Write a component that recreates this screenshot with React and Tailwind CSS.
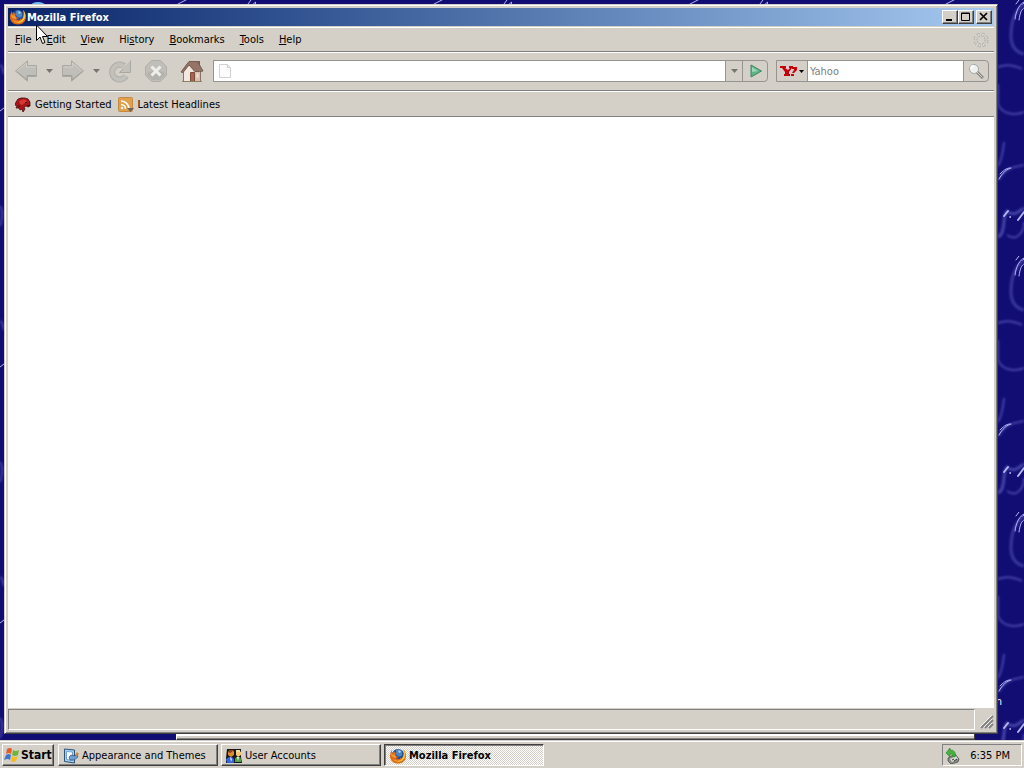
import React, { useState } from 'react';

function Wallpaper() {
  return (
    <svg className="absolute inset-0 h-full w-full" aria-hidden="true">
      <defs>
        <filter id="soft" x="-20%" y="-20%" width="140%" height="140%">
          <feGaussianBlur stdDeviation="1.1" />
        </filter>
        <filter id="glint" x="-20%" y="-20%" width="140%" height="140%">
          <feGaussianBlur stdDeviation="0.4" />
        </filter>
        <pattern id="swirls" width="256" height="256" patternUnits="userSpaceOnUse">
          <rect width="256" height="256" fill="#110d72" />
          <g fill="none" stroke="#4644a8" strokeWidth="2" filter="url(#soft)">
            <path d="M256 54C248 52 243 46 243 36C243 22 246 12 256 4" stroke="#3a37a0" strokeWidth="3" />
            <path d="M230 67C238 64 246 65 254 69M230 84V104C234 114 246 116 256 112" />
            <path d="M230 166C234 160 235 152 236 142M231 180C237 168 246 167 256 165" />
            <path d="M230 237C238 234 234 216 239 211C246 218 252 210 256 208" strokeWidth="3" />
            <path d="M239 235C249 242 256 232 256 222M0 66C2 64 3 70 4 74M0 206C3 210 3 218 0 226" />
          </g>
          <g fill="none" stroke="#b4b8f0" strokeLinecap="round" filter="url(#glint)">
            <path d="M247 19C248 10 252 4 256 2M251 20C252 12 254 9 256 8" />
            <path d="M231 179C234 173 239 169 243 168M232 174C235 171 238 168 242 168" />
            <path d="M236 216L240 211M250 220L256 212" strokeWidth="2" />
            <path d="M178 4L186 0M248 4L251 0M255 4L258 0M0 111L4 108" />
            <circle cx="242" cy="217" r=".5" />
          </g>
        </pattern>
      </defs>
      <rect width="100%" height="100%" fill="url(#swirls)" />
      {/* Top of a desktop icon peeking out */}
      <ellipse cx="38" cy="5" rx="7" ry="3" fill="#6cbdf0" />
    </svg>
  );
}

function FirefoxIcon() {
  return (
    <svg viewBox="0 0 16 16" className="h-4 w-4 shrink-0" aria-hidden="true">
      <circle cx="8" cy="7.500" r="6.500" fill="#24509b" />
      <path d="M6 2C9 0 13 3 12 7C10 10 7 8 6 6Z" fill="#4d86c4" />
      <path d="M8 3C9 2 11 3 11 4L9 5Z" fill="#a7d3ee" />
      <path d="M2 2C1 3 0 6 0 8C0 12 3 15.500 8 15.500C13 15.500 16 12 16 8C16 5 15 3 13 1C15 5 14 8 12 10C10 12 7 11 6 10L9 9C7 8 5 8 5 6L7 5C5 5 4 4 4 3L2 5Z" fill="#e06a16" />
      <path d="M13 1C16 4 16 9 13 12C10 15 5 14 3 11C7 14 11 13 13 9C14 6 14 4 13 1Z" fill="#f8c43c" />
      <path d="M1 5L3 7L5 6L6 10C4 10 2 9 1 7Z" fill="#f29830" />
    </svg>
  );
}

function ArrowIcon({ flip }) {
  return (
    <svg viewBox="0 0 24 22" className={flip ? 'h-[22px] w-6 -scale-x-100' : 'h-[22px] w-6'} aria-hidden="true">
      <path d="M1.500 11L13.500 .8V5.500H22.500V16.500H13.500V21.200Z" fill="#c0beb8" stroke="#aaa8a3" />
      <path d="M3.500 10.500L12.500 3V7H21.500" fill="none" stroke="#d0cec8" />
      <path d="M3 12L13 20V15.500H22" fill="none" stroke="#a19f9a" />
    </svg>
  );
}

function ReloadIcon() {
  return (
    <svg viewBox="0 0 24 24" className="h-6 w-6" aria-hidden="true">
      <path d="M16 7A7.500 7.500 0 1 0 18 17" fill="none" stroke="#b0aea9" strokeWidth="6" />
      <path d="M16 7A7.500 7.500 0 1 0 18 17" fill="none" stroke="#c3c1bb" strokeWidth="4" />
      <path d="M22.500 1.500V13.500H11.500L15 10L12.500 7.500L17 7Z" fill="#c3c1bb" />
      <path d="M22.500 1.500V13.500H11.500L15 10" fill="none" stroke="#aaa8a3" />
    </svg>
  );
}

function StopIcon() {
  return (
    <svg viewBox="0 0 24 24" className="h-6 w-6" aria-hidden="true">
      <path d="M7.500 1.500H16.500L22.500 7.500V16.500L16.500 22.500H7.500L1.500 16.500V7.500Z" fill="#c0beb9" stroke="#b0aea9" />
      <path d="M3 14Q12 9 21 14V16L16 21H8L3 16Z" fill="#b4b2ad" />
      <path d="M7.500 7.500L16.500 16.500M16.500 7.500L7.500 16.500" stroke="#efeeea" strokeWidth="3" />
    </svg>
  );
}

function HomeIcon() {
  return (
    <svg viewBox="0 0 24 24" className="h-6 w-6" aria-hidden="true">
      <path d="M3.500 11L9 4L20.500 11V22.500H3.500Z" fill="#d9c0af" stroke="#8a7364" />
      <path d="M4 12L9 6L13 11V22H4Z" fill="#f3e8df" />
      <path d="M17 2H20V7H17Z" fill="#8b5a4d" />
      <path d="M1 13L9 2.500L17.500 2.500L23 12L19.500 12.500H15L9 6L3 13.500Z" fill="#957468" stroke="#755a50" />
      <path d="M10.500 13.500H14.500V22.500H10.500Z" fill="#a8624e" stroke="#7b4a3d" />
      <path d="M16.500 14.500H18.500V18.500H16.500Z" fill="#f0dfd2" />
      <path d="M2 22.500H22" stroke="#8b8263" />
    </svg>
  );
}

function PageIcon() {
  return (
    <svg viewBox="0 0 12 14" className="h-[14px] w-3 shrink-0" aria-hidden="true">
      <path d="M.5.500H8.500L11.500 3.500V13.500H.500Z" fill="#fcfcfc" stroke="#d2d2d2" />
      <path d="M8.500.500V3.500H11.500" fill="none" stroke="#d2d2d2" />
    </svg>
  );
}

function Caret({ dark }) {
  return (
    <svg viewBox="0 0 7 4" className={dark ? 'h-[3px] w-[5px] shrink-0' : 'h-1 w-[7px] shrink-0'} aria-hidden="true">
      <path d="M0 0H7L3.500 4Z" fill={dark ? '#000' : '#77756f'} />
    </svg>
  );
}

function GoIcon() {
  return (
    <svg viewBox="0 0 12 14" className="h-[14px] w-3" aria-hidden="true">
      <path d="M1 1L11.500 7L1 13Z" fill="#5fb488" stroke="#3b8560" />
      <path d="M2 3L8 7L2 8Z" fill="#9bd6b7" />
    </svg>
  );
}

function YahooIcon() {
  return (
    <svg viewBox="0 0 17 12" className="h-3 w-[17px] shrink-0" aria-hidden="true">
      <path d="M0 1H6V3H5L8 5L10 3H9V1H13V3H12L9 7V9H10V11H4V9H5V7L2 3H0Z" fill="#c8000c" />
      <path d="M12 2H17V5L14 8H12L14 5V4H12ZM11 9H14V11H11Z" fill="#c8000c" />
    </svg>
  );
}

function SearchIcon() {
  return (
    <svg viewBox="0 0 16 16" className="h-4 w-4" aria-hidden="true">
      <path d="M9 9L15 15" stroke="#85837d" strokeWidth="3" />
      <path d="M9 9L14.500 14.500" stroke="#d7d6d2" />
      <circle cx="6" cy="6" r="4.500" fill="#edf1f1" stroke="#a5a6a5" />
      <path d="M3 6Q3 3 6 3" fill="none" stroke="#fff" strokeWidth="2" />
    </svg>
  );
}

function Throbber() {
  return (
    <svg viewBox="0 0 16 16" className="h-4 w-4" aria-hidden="true">
      <circle cx="8" cy="8" r="5.500" fill="none" stroke="#b3b1ac" strokeWidth="4" strokeDasharray="2.600 1.700" />
      <circle cx="8" cy="8" r="5.500" fill="none" stroke="#dedcd7" strokeWidth="2" strokeDasharray="1.600 2.700" strokeDashoffset="-.5" />
    </svg>
  );
}

function DinoIcon() {
  return (
    <svg viewBox="0 0 16 16" className="h-4 w-4 shrink-0" aria-hidden="true">
      <path d="M1 5L3 2L6 1H10L13 2L15 5V9L13 10L11 9L9 10L10 12L8 15L7 12L5 13L4 11L1 11L2 9L0 8Z" fill="#a81417" stroke="#4c0c10" strokeWidth=".8" />
      <path d="M4 4L9 2L12 4L10 6L7 8L5 7Z" fill="#d93635" />
      <path d="M10 5H12V6H10M12 8H15V9H12M3 8L5 9L4 10" fill="#2b090a" />
    </svg>
  );
}

function FeedIcon() {
  return (
    <svg viewBox="0 0 16 16" className="h-4 w-4 shrink-0" aria-hidden="true">
      <rect x=".5" y=".5" width="14" height="14" rx="1" fill="#e3a04c" stroke="#c48a40" />
      <path d="M3 4A8 8 0 0 1 11 12M3 7.500A4.500 4.500 0 0 1 7.500 12" fill="none" stroke="#fff" strokeWidth="1.600" />
      <circle cx="4" cy="11" r="1.200" fill="#fff" />
      <path d="M9 11H16L12.500 15Z" fill="#6c6259" />
    </svg>
  );
}

function WindowsIcon() {
  return (
    <svg viewBox="0 0 16 16" className="h-4 w-4 shrink-0" aria-hidden="true">
      <path d="M3 2Q6 0 8 2L7 7Q5 5 2 7Z" fill="#e85a27" />
      <path d="M9 3Q12 5 15 3L14 8Q11 10 8 8Z" fill="#70b536" />
      <path d="M2 8Q5 6 7 8L6 13Q4 11 0 13Z" fill="#4274d0" />
      <path d="M8 9Q11 11 14 9L12 14Q9 16 7 14Z" fill="#f4bd21" />
    </svg>
  );
}

function ThemesIcon() {
  return (
    <svg viewBox="0 0 16 16" className="h-4 w-4 shrink-0" aria-hidden="true">
      <path d="M1.500 1L11.500 2V15L1.500 13.500Z" fill="#a9cfee" stroke="#2b5478" />
      <path d="M3.500 3.500L9.500 4V12.500L3.500 11.500Z" fill="#fff" stroke="#6fa0cc" />
      <path d="M6 9L8 7L12 8L14 6L15 9L11 12H7Z" fill="#6f9ed2" stroke="#233f6c" strokeWidth=".6" />
      <path d="M12 7L14 4L16 6L14 8Z" fill="#cc8539" />
    </svg>
  );
}

function UsersIcon() {
  return (
    <svg viewBox="0 0 16 16" className="h-4 w-4 shrink-0" aria-hidden="true">
      <path d="M1 1H15V9L16 15H0V10Z" fill="#171717" />
      <path d="M2 4L4 2H7L8 4V7L5 9L2 7Z" fill="#dc8c34" />
      <path d="M2 4L4 2H7L6 4L4 5Z" fill="#8e421b" />
      <path d="M10 4L12 2L15 4V7L12 9L10 7Z" fill="#f2c77a" />
      <path d="M10 2H14V4H10Z" fill="#f2e29a" />
      <path d="M0 11L3 9H6L8 11V15H1Z" fill="#3563dc" />
      <path d="M9 11L10 9H14L15 11V14H9Z" fill="#52a04a" />
      <path d="M4 9L6 11L5 14ZM11 9H13L12 13Z" fill="#eef5ff" />
    </svg>
  );
}

function TrayIcon() {
  return (
    <svg viewBox="0 0 16 16" className="h-4 w-4 shrink-0" aria-hidden="true">
      <path d="M3 10L10 6L14 11L13 14L6 16L3 13Z" fill="#8a8c87" stroke="#41423f" strokeWidth=".7" />
      <path d="M5 11L11 8L13 11L7 14Z" fill="#d9dbd5" />
      <path d="M7 12L9 11M9 13L12 11" stroke="#333" />
      <path d="M1 5L5 0V2C9 2 11 4 10 9L7 8C8 6 7 6 5 6V9Z" fill="#46b340" stroke="#1c7a1f" strokeWidth=".6" />
    </svg>
  );
}

function CaptionButton({ label, children }) {
  return (
    <button
      aria-label={label}
      className="flex h-[14px] w-4 items-center justify-center border border-t-white border-l-white border-r-[#404040] border-b-[#404040] bg-[#d4d0c8] shadow-[inset_-1px_-1px_0_#808080]"
    >
      <svg viewBox="0 0 10 10" className="h-[10px] w-[10px]" fill="none" stroke="#000" aria-hidden="true">
        {children}
      </svg>
    </button>
  );
}

const menus = [
  { key: 'F', before: '', after: 'ile' },
  { key: 'E', before: '', after: 'dit' },
  { key: 'V', before: '', after: 'iew' },
  { key: 's', before: 'Hi', after: 'tory' },
  { key: 'B', before: '', after: 'ookmarks' },
  { key: 'T', before: '', after: 'ools' },
  { key: 'H', before: '', after: 'elp' },
];

const tasks = [
  { title: 'Appearance and Themes', icon: <ThemesIcon /> },
  { title: 'User Accounts', icon: <UsersIcon /> },
  { title: 'Mozilla Firefox', icon: <FirefoxIcon />, active: true },
];

function BrowserWindow() {
  const [url, setUrl] = useState('');
  const [query, setQuery] = useState('');

  return (
    <main className="relative flex min-w-0 flex-1 flex-col border border-t-[#d4d0c8] border-l-[#d4d0c8] border-r-[#404040] border-b-[#404040] bg-[#d4d0c8] p-[3px] shadow-[inset_1px_1px_0_#fff,inset_-1px_-1px_0_#808080]">
      {/* Title bar */}
      <header className="flex h-[18px] items-center gap-px bg-linear-to-r from-[#0a246a] to-[#a6caf0] px-[2px] text-white">
        <FirefoxIcon />
        <h1 className="flex-1 pt-px font-bold">Mozilla Firefox</h1>
        <div className="flex">
          <CaptionButton label="Minimize">
            <path d="M1 8H7" strokeWidth="2" />
          </CaptionButton>
          <CaptionButton label="Maximize">
            <path d="M.5 1H8.500V8.500H.500ZM0 1.500H9" />
          </CaptionButton>
          <div className="ml-[2px] flex">
            <CaptionButton label="Close">
              <path d="M1 1L8 8M8 1L1 8" strokeWidth="1.700" />
            </CaptionButton>
          </div>
        </div>
      </header>

      {/* Menu bar */}
      <nav className="mt-px flex h-[25px] items-center justify-between border-t border-b border-t-white border-b-[#808080] pr-[5px] pl-[7px]">
        <div className="flex gap-[15px] pt-px">
          {menus.map((m) => (
            <button key={m.key}>
              {m.before}
              <span className="underline">{m.key}</span>
              {m.after}
            </button>
          ))}
        </div>
        <Throbber />
      </nav>

      {/* Navigation toolbar */}
      <div className="flex h-[39px] items-center border-t border-b border-t-white border-b-[#808080] pr-[5px] pb-px pl-[6px]">
        <div className="flex items-center gap-2">
          <button aria-label="Back"><ArrowIcon /></button>
          <Caret />
          <button aria-label="Forward"><ArrowIcon flip /></button>
          <Caret />
        </div>
        <div className="ml-2 flex gap-3">
          <button aria-label="Reload"><ReloadIcon /></button>
          <button aria-label="Stop"><StopIcon /></button>
          <button aria-label="Home"><HomeIcon /></button>
        </div>
        <div className="ml-[9px] flex h-[22px] flex-1 rounded-r border border-[#96948e]">
          <div className="flex flex-1 items-center bg-white pl-[5px]">
            <PageIcon />
            <input
              aria-label="Location"
              value={url}
              onChange={(e) => setUrl(e.target.value)}
              className="min-w-0 flex-1 px-1 outline-none"
            />
          </div>
          <button aria-label="Show history" className="flex w-[17px] items-center justify-center border-l border-[#96948e]">
            <Caret />
          </button>
          <button aria-label="Go" className="flex w-[25px] items-center justify-center border-l border-[#96948e] pl-[2px]">
            <GoIcon />
          </button>
        </div>
        <div className="ml-2 flex h-[22px] rounded-r border border-[#96948e]">
          <button aria-label="Choose search engine" className="flex w-[31px] items-center justify-center gap-[2px] border-r border-[#96948e]">
            <YahooIcon />
            <Caret dark />
          </button>
          <input
            aria-label="Search"
            placeholder="Yahoo"
            value={query}
            onChange={(e) => setQuery(e.target.value)}
            className="w-[155px] bg-white px-[2px] pt-px outline-none placeholder:text-[#808080]"
          />
          <button aria-label="Search the web" className="flex w-[25px] items-center justify-center border-l border-[#96948e]">
            <SearchIcon />
          </button>
        </div>
      </div>

      {/* Bookmarks */}
      <div className="flex h-[26px] items-center gap-[6px] border-t border-b border-t-white border-b-[#808080] pt-px pl-[7px]">
        <a href="#started" className="flex items-center gap-1"><DinoIcon />Getting Started</a>
        <a href="#headlines" className="flex items-center gap-1"><FeedIcon />Latest Headlines</a>
      </div>

      <section className="flex-1 bg-white" aria-label="Page content" />

      {/* Status bar */}
      <footer className="flex h-[22px] pt-px">
        <div className="flex-1 border border-t-[#808080] border-l-[#808080] border-r-white border-b-white" />
        <svg viewBox="0 0 19 20" className="h-5 w-[19px]" aria-hidden="true">
          <path d="M6 19L18 7M10 19L18 11M14 19L18 15" stroke="#808080" strokeWidth="1.800" />
          <path d="M5 18L17 6M9 18L17 10M13 18L17 14" stroke="#fff" strokeWidth=".8" />
        </svg>
      </footer>
    </main>
  );
}

function Taskbar() {
  return (
    <div className="relative flex h-7 items-center bg-[#d4d0c8] px-[2px] pt-[2px] shadow-[inset_0_1px_0_#d4d0c8,inset_0_2px_0_#fff]">
      <button className="mr-1 flex h-[22px] w-[52px] items-center gap-px border border-t-white border-l-white border-r-[#404040] border-b-[#404040] px-px text-[12px] font-bold shadow-[inset_-1px_-1px_0_#808080]">
        <WindowsIcon />
        Start
      </button>
      <div className="flex flex-1 gap-[3px]">
        {tasks.map((t) => (
          <button
            key={t.title}
            className={
              t.active
                ? 'flex h-[22px] w-[160px] items-center gap-[3px] border border-t-[#404040] border-l-[#404040] border-r-white border-b-white bg-[repeating-conic-gradient(#fff_0_25%,#d4d0c8_0_50%)] bg-size-[2px_2px] pt-px pr-1 pl-[5px] font-bold shadow-[inset_1px_1px_0_#808080]'
                : 'flex h-[22px] w-[160px] items-center gap-[3px] border border-t-white border-l-white border-r-[#404040] border-b-[#404040] px-1 pt-px shadow-[inset_-1px_-1px_0_#808080]'
            }
          >
            {t.icon}
            {t.title}
          </button>
        ))}
      </div>
      <div className="flex h-[22px] w-20 items-center justify-between border border-t-[#808080] border-l-[#808080] border-r-white border-b-white pt-px pr-[11px] pl-[2px]">
        <TrayIcon />
        <time>6:35 PM</time>
      </div>
    </div>
  );
}

export default function App() {
  return (
    <div className="flex h-screen cursor-default flex-col overflow-hidden font-['DejaVu_Sans_Condensed',sans-serif] text-[11px] leading-[14px] text-black">
      <div className="relative flex min-h-0 flex-1 pt-1 pr-[26px] pb-[6px] pl-1">
        <Wallpaper />
        {/* End of an icon label hidden behind the window */}
        <span className="absolute right-[22px] bottom-[31px] text-white">n</span>
        {/* Bottom edge of the window underneath */}
        <div className="absolute right-[49px] bottom-0 left-[176px] h-3 border border-[#404040] border-l-white bg-white shadow-[inset_0_-1px_0_#808080,inset_0_-3px_0_#d4d0c8]" />
        <BrowserWindow />
        <svg viewBox="0 0 12 21" className="absolute top-6 left-9 h-[21px] w-3" aria-hidden="true">
          <path d="M.5 1V16.500L4 13L6.500 19.500L9 18.500L6.500 12.500H11.500Z" fill="#fff" stroke="#000" />
        </svg>
      </div>
      <Taskbar />
    </div>
  );
}
